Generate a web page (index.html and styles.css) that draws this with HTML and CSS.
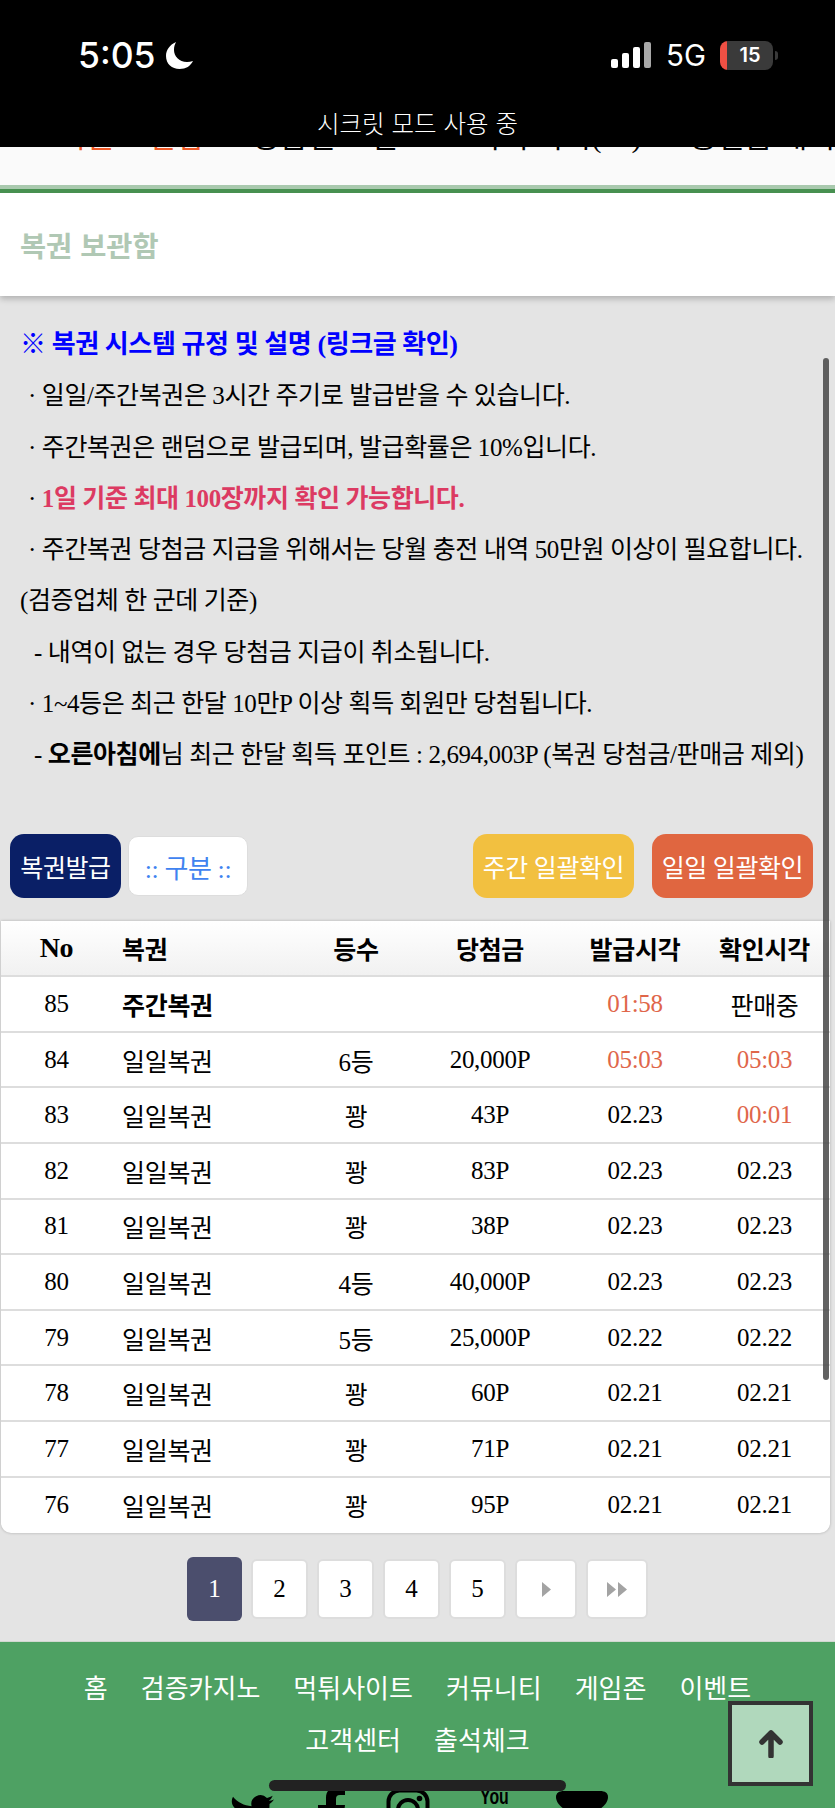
FILE: index.html
```html
<!DOCTYPE html>
<html lang="ko">
  <head>
    <meta charset="UTF-8" />
    <meta name="viewport" content="width=device-width, initial-scale=1.0" />
    <title>복권 보관함</title>
    <link rel="stylesheet" href="styles.css">
  </head>
  <body>
    <div class="status">
      <div class="status-top">
        <div class="clock">
          <span>5:05</span>
          <svg class="moon" viewBox="0 0 27 27"><path d="M10 0C3.500 3 0 8 0 14c0 8 6 13 13.500 13C20 27 24.500 24 27 19c-2 .7-4 1-6 1C13 20 8 14 8 8c0-3 .7-5.500 2-8z" fill="#fff"/></svg>
        </div>
        <div class="status-right">
          <div class="signal">
            <i class="b1"></i><i class="b2"></i><i class="b3"></i><i class="b4"></i>
          </div>
          <span class="net">5G</span>
          <div class="battery"><span>15</span></div>
          <div class="nub"></div>
        </div>
      </div>
      <div class="private">시크릿 모드 사용 중</div>
    </div>

    <div class="nav">
      <div class="nav-inner">
        <span class="on">복권 보관함</span>
        <span>등급별 포인트</span>
        <span>쪽지 목록(16)</span>
        <span>충전금 내역 확인</span>
      </div>
    </div>

    <div class="title">복권 보관함</div>

    <div class="guide">
      <p class="head">※ 복권 시스템 규정 및 설명 (링크글 확인)</p>
      <p class="dot">· 일일/주간복권은 3시간 주기로 발급받을 수 있습니다.</p>
      <p class="dot">· 주간복권은 랜덤으로 발급되며, 발급확률은 10%입니다.</p>
      <p class="dot">· <b class="pink">1일 기준 최대 100장까지 확인 가능합니다.</b></p>
      <p class="dot">· 주간복권 당첨금 지급을 위해서는 당월 충전 내역 50만원 이상이 필요합니다.</p>
      <p>(검증업체 한 군데 기준)</p>
      <p class="dash">- 내역이 없는 경우 당첨금 지급이 취소됩니다.</p>
      <p class="dot">· 1~4등은 최근 한달 10만P 이상 획득 회원만 당첨됩니다.</p>
      <p class="dash">- <b>오른아침에</b>님 최근 한달 획득 포인트 : 2,694,003P (복권 당첨금/판매금 제외)</p>
    </div>

    <div class="actions">
      <div class="left">
        <button class="btn navy">복권발급</button>
        <div class="pick">:: 구분 ::</div>
      </div>
      <div class="right">
        <button class="btn yellow">주간 일괄확인</button>
        <button class="btn orange">일일 일괄확인</button>
      </div>
    </div>

    <table class="list">
      <thead>
        <tr>
          <th class="c-no">No</th>
          <th class="c-name">복권</th>
          <th class="c-rank">등수</th>
          <th class="c-prize">당첨금</th>
          <th class="c-time">발급시각</th>
          <th class="c-check">확인시각</th>
        </tr>
      </thead>
      <tbody>
        <tr><td>85</td><td class="c-name"><b>주간복권</b></td><td></td><td></td><td class="red">01:58</td><td>판매중</td></tr>
        <tr><td>84</td><td class="c-name">일일복권</td><td>6등</td><td>20,000P</td><td class="red">05:03</td><td class="red">05:03</td></tr>
        <tr><td>83</td><td class="c-name">일일복권</td><td>꽝</td><td>43P</td><td>02.23</td><td class="red">00:01</td></tr>
        <tr><td>82</td><td class="c-name">일일복권</td><td>꽝</td><td>83P</td><td>02.23</td><td>02.23</td></tr>
        <tr><td>81</td><td class="c-name">일일복권</td><td>꽝</td><td>38P</td><td>02.23</td><td>02.23</td></tr>
        <tr><td>80</td><td class="c-name">일일복권</td><td>4등</td><td>40,000P</td><td>02.23</td><td>02.23</td></tr>
        <tr><td>79</td><td class="c-name">일일복권</td><td>5등</td><td>25,000P</td><td>02.22</td><td>02.22</td></tr>
        <tr><td>78</td><td class="c-name">일일복권</td><td>꽝</td><td>60P</td><td>02.21</td><td>02.21</td></tr>
        <tr><td>77</td><td class="c-name">일일복권</td><td>꽝</td><td>71P</td><td>02.21</td><td>02.21</td></tr>
        <tr><td>76</td><td class="c-name">일일복권</td><td>꽝</td><td>95P</td><td>02.21</td><td>02.21</td></tr>
      </tbody>
    </table>

    <div class="pages">
      <a class="page active">1</a>
      <a class="page">2</a>
      <a class="page">3</a>
      <a class="page">4</a>
      <a class="page">5</a>
      <a class="page wide"><svg width="9" height="15" viewBox="0 0 9 15"><path d="M0 0l9 7.500-9 7.500z" fill="#a3a3a3"/></svg></a>
      <a class="page wide"><svg width="20" height="15" viewBox="0 0 20 15"><path d="M0 0l9 7.500-9 7.500zM11 0l9 7.500-9 7.500z" fill="#a3a3a3"/></svg></a>
    </div>

    <div class="footer">
      <div class="menu">
        <a>홈</a><a>검증카지노</a><a>먹튀사이트</a><a>커뮤니티</a><a>게임존</a><a>이벤트</a><a>고객센터</a><a>출석체크</a>
      </div>
      <div class="social">
        <svg class="tw" viewBox="0 0 24 24"><path d="M23.953 4.570a10 10 0 01-2.825.775 4.958 4.958 0 002.163-2.723c-.951.555-2.005.959-3.127 1.184a4.920 4.920 0 00-8.384 4.482C7.690 8.095 4.067 6.130 1.640 3.162a4.822 4.822 0 00-.666 2.475c0 1.710.870 3.213 2.188 4.096a4.904 4.904 0 01-2.228-.616v.060a4.923 4.923 0 003.946 4.827 4.996 4.996 0 01-2.212.085 4.936 4.936 0 004.604 3.417 9.867 9.867 0 01-6.102 2.105c-.390 0-.779-.023-1.170-.067a13.995 13.995 0 007.557 2.209c9.053 0 13.998-7.496 13.998-13.985 0-.210 0-.420-.015-.630A9.935 9.935 0 0024 4.590z"/></svg>
        <svg class="fb" viewBox="0 0 27 50"><path d="M27 0v8h-5c-3 0-4 1.500-4 4v6h9l-1 9h-8v23H8V27H0v-9h8v-7C8 4 12 0 19 0z"/></svg>
        <svg class="ig" viewBox="0 0 44 44"><rect x="2.500" y="2.500" width="39" height="39" rx="11" fill="none" stroke="#000" stroke-width="4"/><circle cx="22" cy="22" r="10" fill="none" stroke="#000" stroke-width="4"/><circle cx="33.500" cy="10.500" r="2.800"/></svg>
        <span class="yt">You</span>
        <svg class="bowl" viewBox="0 0 52 24"><path d="M8 0h36c5 0 8 2 8 6 0 8-10 14-18 18H18C10 20 0 14 0 6c0-4 3-6 8-6z"/></svg>
      </div>
    </div>

    <div class="scrollbar"></div>
    <div class="to-top">
      <svg width="24" height="28" viewBox="0 0 24 28"><path d="M12 26V3M3 12l9-9 9 9" fill="none" stroke="#333" stroke-width="5.500" stroke-linecap="round" stroke-linejoin="round"/></svg>
    </div>
    <div class="home-bar"></div>
  </body>
</html>
```

FILE: styles.css
```css
* {
  box-sizing: border-box;
}
html,
body {
  margin: 0;
  padding: 0;
}
body {
  position: relative;
  width: 835px;
  height: 1808px;
  overflow: hidden;
  background: #e4e4e4;
  color: #000;
  font-family: "Liberation Serif", "Noto Sans CJK KR", serif;
}
p {
  margin: 0;
}

.status {
  position: relative;
  z-index: 2;
  height: 147px;
  background: #000;
  color: #fff;
  font-family: Inter, "Noto Sans CJK KR", sans-serif;
}
.status-top {
  display: flex;
  justify-content: space-between;
  align-items: center;
  height: 112px;
  padding: 0 57px 2px 78px;
}
.clock {
  display: flex;
  align-items: center;
  gap: 10px;
  font-size: 35.500px;
  font-weight: 500;
}
.moon {
  width: 27px;
  height: 27px;
}
.status-right {
  display: flex;
  align-items: center;
}
.signal {
  display: flex;
  align-items: flex-end;
  gap: 4px;
  height: 26px;
}
.signal i {
  display: block;
  width: 7px;
  background: #fff;
  border-radius: 2px;
}
.signal .b1 {
  height: 9px;
}
.signal .b2 {
  height: 15px;
}
.signal .b3 {
  height: 21px;
}
.signal .b4 {
  height: 26px;
  background: #a8a8a8;
}
.net {
  margin-left: 15px;
  font-size: 29.500px;
}
.battery {
  width: 53px;
  height: 29px;
  margin-left: 14px;
  display: flex;
  justify-content: center;
  align-items: center;
  padding-left: 7px;
  border-radius: 8px;
  background: linear-gradient(to right, #ef5044 7px, #3a3a3a 7px);
  font-size: 20px;
  font-weight: 600;
}
.nub {
  width: 3px;
  height: 9px;
  margin-left: 2px;
  border-radius: 0 3px 3px 0;
  background: #3a3a3a;
}
.private {
  text-align: center;
  font-size: 24.500px;
  font-weight: 300;
  line-height: 24px;
}

.nav {
  height: 42px;
  overflow: hidden;
  background: #fafafa;
}
.nav-inner {
  display: flex;
  gap: 48px;
  margin-top: -28px;
  padding-left: 59px;
  white-space: nowrap;
  font-size: 30px;
  line-height: 36px;
}
.nav-inner .on {
  color: #f05a28;
}

.title {
  height: 107px;
  display: flex;
  align-items: center;
  padding-left: 20px;
  background: #fff;
  border-top: 4px solid #479050;
  box-shadow: 0 -4px 0 #a9c9ae, 0 3px 6px rgba(0, 0, 0, 0.22);
  color: #b0c8b4;
  font-family: "Noto Sans CJK KR", sans-serif;
  font-size: 28.400px;
  font-weight: 700;
}

.guide {
  padding: 23px 0 0 20px;
  font-size: 25px;
  letter-spacing: -0.4px;
  line-height: 51.250px;
  white-space: nowrap;
}
.head {
  color: #0000ff;
  font-size: 26px;
  font-weight: 700;
}
.dot {
  padding-left: 8px;
}
.dash {
  padding-left: 14px;
}
.pink {
  color: #dc3a62;
}

.actions {
  display: flex;
  justify-content: space-between;
  align-items: center;
  margin-top: 54px;
  padding: 0 22px 0 10px;
}
.left {
  display: flex;
  align-items: center;
  gap: 7px;
}
.right {
  display: flex;
  gap: 18px;
}
.btn {
  height: 64px;
  padding: 0;
  border: 0;
  border-radius: 14px;
  color: #fff;
  font-family: inherit;
  font-size: 25px;
  letter-spacing: -0.4px;
}
.navy {
  width: 111px;
  background: #0a1f66;
}
.yellow {
  width: 161px;
  background: #f2c040;
}
.orange {
  width: 161px;
  background: #e06640;
}
.pick {
  width: 120px;
  height: 60px;
  display: flex;
  justify-content: center;
  align-items: center;
  border: 1px solid #ddd;
  border-radius: 10px;
  background: #fff;
  color: #3f83f0;
  font-size: 26px;
  letter-spacing: -0.4px;
}

.list {
  width: 829px;
  margin: 23px 0 0 1px;
  border-collapse: separate;
  border-spacing: 0;
  table-layout: fixed;
  background: #fff;
  border-radius: 0 0 10px 10px;
  box-shadow: 0 0 3px rgba(0, 0, 0, 0.25);
  font-size: 25px;
  letter-spacing: -0.3px;
}
.list th {
  height: 56px;
  padding: 0;
  font-weight: 700;
  background: linear-gradient(to bottom, #fff, #f1f1f1);
  border-bottom: 2px solid #ddd;
}
.list td {
  height: 55.600px;
  padding: 0;
  text-align: center;
  border-bottom: 2px solid #ddd;
}
.list tbody tr:last-child td {
  border-bottom: 0;
}
.list .c-name {
  padding-left: 10px;
  text-align: left;
}
.list .c-no {
  font-size: 28px;
}
.c-no {
  width: 111px;
}
.c-name {
  width: 191px;
}
.c-rank {
  width: 106px;
}
.c-prize {
  width: 162px;
}
.c-time {
  width: 128px;
}
.c-check {
  width: 131px;
}
.red {
  color: #e0664a;
}

.pages {
  display: flex;
  justify-content: center;
  align-items: center;
  gap: 9px;
  height: 64px;
  margin-top: 24px;
}
.page {
  width: 57px;
  height: 60px;
  display: flex;
  justify-content: center;
  align-items: center;
  border: 2px solid #ddd;
  border-radius: 6px;
  background: #fff;
  font-size: 25px;
}
.page.active {
  width: 55px;
  height: 64px;
  border: 0;
  background: #4b4e6d;
  color: #fff;
}
.page.wide {
  width: 62px;
}

.footer {
  height: 170px;
  margin-top: 20px;
  padding-top: 19px;
  background: #4ea163;
  border-top: 1px solid #d0d8d0;
}
.menu {
  display: flex;
  flex-wrap: wrap;
  justify-content: center;
  gap: 0 33px;
  padding: 0 70px;
  color: #fff;
  font-family: "Noto Sans CJK KR", sans-serif;
  font-size: 26px;
  line-height: 52px;
}
.social {
  display: flex;
  align-items: flex-start;
  height: 60px;
  margin-top: 26px;
  padding-left: 230px;
}
.tw {
  width: 44px;
  height: 44px;
}
.fb {
  width: 27px;
  height: 50px;
  margin-left: 44px;
  margin-top: -4px;
}
.ig {
  width: 44px;
  height: 44px;
  margin-left: 41px;
  margin-top: -3px;
}
.yt {
  width: 26px;
  margin-left: 50px;
  margin-top: -7px;
  font-family: "Liberation Sans", sans-serif;
  font-size: 22px;
  font-weight: 700;
  line-height: 26px;
  transform: scale(0.72, 1);
  transform-origin: left top;
}
.bowl {
  width: 52px;
  height: 24px;
  margin-left: 50px;
}

/* overlays */
.scrollbar {
  position: absolute;
  top: 358px;
  left: 823px;
  width: 6px;
  height: 1022px;
  border-radius: 3px;
  background: rgba(70, 70, 70, 0.85);
}
.to-top {
  position: absolute;
  top: 1701px;
  left: 728px;
  width: 85px;
  height: 85px;
  display: flex;
  justify-content: center;
  align-items: center;
  border: 4px solid #333;
  background: #b0d8bc;
}
.home-bar {
  position: absolute;
  top: 1780px;
  left: 269px;
  width: 297px;
  height: 11px;
  border-radius: 6px;
  background: #222;
}
```
